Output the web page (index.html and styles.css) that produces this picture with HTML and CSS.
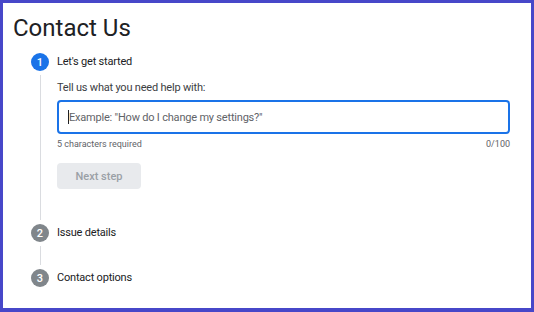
FILE: index.html
```html
<!DOCTYPE html>
<html lang="en">
<head>
  <meta charset="UTF-8" />
  <meta name="viewport" content="width=device-width, initial-scale=1.0" />
  <title>Contact Us</title>
  <link rel="stylesheet" href="styles.css">
</head>
<body>
  <div class="frame">
    <h1 class="title">Contact Us</h1>
    <div class="steps">
      <div class="step active">
        <div class="step-num">1</div>
        <div class="step-label">Let's get started</div>
        <div class="rail"></div>
        <div class="step-body">
          <label class="field-label" for="helpInput">Tell us what you need help with:</label>
          <div class="input-box">
            <span class="caret"></span>
            <input id="helpInput" type="text" placeholder="Example: &quot;How do I change my settings?&quot;">
          </div>
          <div class="helper">
            <span>5 characters required</span>
            <span>0/100</span>
          </div>
          <button class="next-btn" disabled>Next step</button>
        </div>
      </div>
      <div class="step">
        <div class="step-num">2</div>
        <div class="step-label">Issue details</div>
        <div class="rail short"></div>
        <div></div>
      </div>
      <div class="step">
        <div class="step-num">3</div>
        <div class="step-label">Contact options</div>
      </div>
    </div>
  </div>
</body>
</html>
```

FILE: styles.css
```css
* {
  box-sizing: border-box;
}
body {
  margin: 0;
  font-family: Roboto, 'Liberation Sans', sans-serif;
  color: #202124;
  background: #fff;
}
.frame {
  height: 312px;
  border: 3px solid #4747c9;
  border-bottom-width: 4px;
  padding: 0 21px 0 10px;
  overflow: hidden;
}
.title {
  margin: 0;
  padding-top: 10px;
  font-size: 24px;
  line-height: 30px;
  font-weight: 400;
  color: #202124;
}
.steps {
  padding-left: 18px;
  padding-top: 10px;
}
.step {
  display: grid;
  grid-template-columns: 18px 1fr;
  column-gap: 8px;
}
.step-num {
  width: 18px;
  height: 18px;
  border-radius: 50%;
  background: #80868b;
  color: #fff;
  font-size: 11px;
  font-weight: 500;
  display: flex;
  align-items: center;
  justify-content: center;
}
.step.active .step-num {
  background: #1a73e8;
}
.step-label {
  font-size: 11px;
  letter-spacing: -0.2px;
  line-height: 18px;
  color: #202124;
}
.rail {
  width: 1px;
  justify-self: center;
  background: #dadce0;
  margin: 4px 0;
}
.rail.short {
  height: 19px;
}
.step-body {
  padding: 9px 0 35px;
  display: flex;
  flex-direction: column;
  align-items: flex-start;
}
.field-label {
  font-size: 11px;
  letter-spacing: -0.2px;
  line-height: 16px;
  color: #3c4043;
}
.input-box {
  margin-top: 4px;
  width: 100%;
  height: 34px;
  border: 2px solid #1a73e8;
  border-radius: 4px;
  display: flex;
  align-items: center;
  padding-left: 9px;
}
.caret {
  width: 1px;
  height: 14px;
  background: #202124;
}
.input-box input {
  border: none;
  outline: none;
  flex: 1;
  padding: 0;
  font-family: inherit;
  font-size: 11px;
  letter-spacing: -0.2px;
  color: #202124;
  background: transparent;
}
.input-box input::placeholder {
  color: #5f6368;
}
.helper {
  width: 100%;
  display: flex;
  justify-content: space-between;
  margin-top: 4px;
  font-size: 9px;
  line-height: 13px;
  color: #5f6368;
}
.next-btn {
  margin-top: 12px;
  width: 84px;
  height: 26px;
  border: none;
  border-radius: 4px;
  background: #e8eaed;
  color: #9aa0a6;
  font-family: inherit;
  font-size: 11px;
  font-weight: 500;
}
```
